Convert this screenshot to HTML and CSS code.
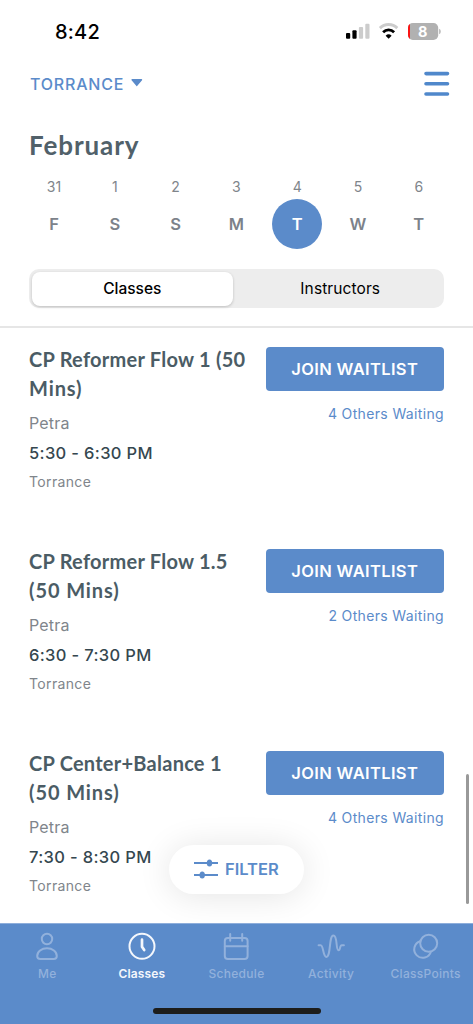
FILE: index.html
```html
<!DOCTYPE html>
<html lang="en">
<head>
<meta charset="utf-8">
<title>Classes</title>
<link rel="stylesheet" href="styles.css">
</head>
<body>
<div class="app">
  <div class="status">
    <span class="clock">8:42</span>
    <svg class="status-icons" width="96" height="18" viewBox="0 0 96 18">
      <rect x="0" y="10" width="4.2" height="5.8" rx="1" fill="#000"/>
      <rect x="6.4" y="7.2" width="4.2" height="8.6" rx="1" fill="#000"/>
      <rect x="12.9" y="4" width="4.2" height="11.8" rx="1" fill="#ccc"/>
      <rect x="19.3" y="0.8" width="4.2" height="15" rx="1" fill="#ccc"/>
      <path d="M33.9 5.1a12.4 12.4 0 0 1 17.4 0" fill="none" stroke="#ccc" stroke-width="2.9"/>
      <path d="M37.1 9.2a7.9 7.9 0 0 1 11 0" fill="none" stroke="#000" stroke-width="2.8"/>
      <path d="M42.6 15.8l-3-3.1a4.4 4.4 0 0 1 6 0z" fill="#000"/>
      <rect x="62" y="0" width="30.2" height="17" rx="4.8" fill="#b1b1b1"/>
      <path d="M64 .9v15.2a4.2 4.2 0 0 1-2-3.8V4.7A4.2 4.2 0 0 1 64 .9z" fill="#fb1414"/>
      <path d="M93.2 5.8c2 .8 2 4.7 0 5.5z" fill="#b1b1b1"/>
      <text class="battery-text" x="76.8" y="13.7" text-anchor="middle">8</text>
    </svg>
  </div>
  <div class="header">
    <div class="location">TORRANCE
      <svg width="12" height="8" viewBox="0 0 12 8"><path d="M1.1.8h9.4L5.8 6.4z" fill="#5b8bca" stroke="#5b8bca" stroke-width="1.4" stroke-linejoin="round"/></svg>
    </div>
    <svg width="26" height="26" viewBox="0 0 26 26"><path d="M2 2.6h21.500M2 12.800h21.500M2 23h21.500" stroke="#5088cb" stroke-width="3.600" stroke-linecap="round"/></svg>
  </div>
  <h1 class="month">February</h1>
  <div class="week">
    <div class="day"><span class="num">31</span><span class="letter">F</span></div>
    <div class="day"><span class="num">1</span><span class="letter">S</span></div>
    <div class="day"><span class="num">2</span><span class="letter">S</span></div>
    <div class="day"><span class="num">3</span><span class="letter">M</span></div>
    <div class="day"><span class="num">4</span><span class="letter selected">T</span></div>
    <div class="day"><span class="num">5</span><span class="letter">W</span></div>
    <div class="day"><span class="num">6</span><span class="letter">T</span></div>
  </div>
  <div class="segments">
    <div class="segment active">Classes</div>
    <div class="segment inactive">Instructors</div>
  </div>
  <div class="list">
    <div class="item">
      <div class="info">
        <h2 class="title">CP Reformer Flow 1 (50<br><span class="second">Mins)</span></h2>
        <div class="teacher">Petra</div><div class="time">5:30 - 6:30 PM</div><div class="place">Torrance</div>
      </div>
      <div class="action"><div class="join">JOIN WAITLIST</div><div class="waiting">4 Others Waiting</div></div>
    </div>
    <div class="item">
      <div class="info">
        <h2 class="title">CP Reformer Flow 1.5<br><span class="second">(50 Mins)</span></h2>
        <div class="teacher">Petra</div><div class="time">6:30 - 7:30 PM</div><div class="place">Torrance</div>
      </div>
      <div class="action"><div class="join">JOIN WAITLIST</div><div class="waiting">2 Others Waiting</div></div>
    </div>
    <div class="item">
      <div class="info">
        <h2 class="title">CP Center+Balance 1<br><span class="second">(50 Mins)</span></h2>
        <div class="teacher">Petra</div><div class="time">7:30 - 8:30 PM</div><div class="place">Torrance</div>
      </div>
      <div class="action"><div class="join">JOIN WAITLIST</div><div class="waiting">4 Others Waiting</div></div>
    </div>
  </div>
  <div class="scrollbar"></div>
  <div class="filter">
    <svg width="26" height="22" viewBox="0 0 26 22"><path d="M1 5h24M1 17h24" stroke="#5b8bca" stroke-width="2"/><ellipse cx="16.500" cy="5" rx="2.700" ry="3.600" fill="#5b8bca"/><ellipse cx="9.200" cy="17" rx="2.700" ry="3.600" fill="#5b8bca"/></svg>
    <span>FILTER</span>
  </div>
  <div class="nav">
    <div class="tab">
      <svg width="30" height="30" viewBox="0 0 30 30"><circle cx="15" cy="8" r="5.200"/><path d="M8.300 28h13.400c2 0 3.100-1.100 3.100-3 0-4.500-4.400-7.700-9.800-7.700s-9.800 3.200-9.800 7.700c0 1.900 1.100 3 3.100 3z"/></svg>
      <span>Me</span>
    </div>
    <div class="tab current">
      <svg width="30" height="30" viewBox="0 0 30 30"><circle cx="15" cy="15.300" r="12.500"/><path d="M15 8.700v7l2.200 3.400" stroke-linecap="round" stroke-linejoin="round" stroke-width="2.700"/></svg>
      <span>Classes</span>
    </div>
    <div class="tab">
      <svg width="30" height="30" viewBox="0 0 30 30"><rect x="3.800" y="7" width="22.800" height="21" rx="3"/><path d="M3.800 15.300h22.800M9.200 3v6.800M21.200 3v6.800" stroke-linecap="round"/></svg>
      <span>Schedule</span>
    </div>
    <div class="tab">
      <svg width="30" height="30" viewBox="0 0 30 30"><path d="M2.600 14.300h2.100c2.800 0 2.300 11.700 5.700 11.700 4.700 0 2.300-21.600 7-21.600 4.500 0 2.100 14.900 5.100 14.900 2.100 0 1-5 3.300-5h2.100" stroke-linecap="round"/></svg>
      <span>Activity</span>
    </div>
    <div class="tab">
      <svg width="30" height="30" viewBox="0 0 30 30"><circle cx="17.700" cy="12.200" r="8.500"/><path d="M9.200 10.200a8.500 8.500 0 1 0 10.700 10.500"/></svg>
      <span>ClassPoints</span>
    </div>
  </div>
  <div class="home"></div>
</div>
</body>
</html>
```
FILE: styles.css
```css
* { box-sizing: border-box; }
body { margin: 0; background: #fff; font-family: Inter, "Liberation Sans", sans-serif; }
.app { position: relative; width: 473px; height: 1024px; overflow: hidden; display: flex; flex-direction: column; background: #fff; }
.status { height: 62px; flex: none; padding: 1px 31px 0 55px; display: flex; align-items: center; justify-content: space-between; }
.clock { font-size: 20px; font-weight: 500; letter-spacing: .2px; padding-top: 1px; }
.status-icons { display: block; }
.battery-text { font: 700 14.5px Inter, sans-serif; fill: #fff; }
.header { height: 44px; flex: none; padding: 0 23.5px 0 30px; display: flex; align-items: center; justify-content: space-between; }
.location { display: flex; align-items: center; gap: 7px; color: #5b8bca; font-size: 16px; font-weight: 500; letter-spacing: .8px; }
.location svg { margin-top: -3px; }
.month { margin: 21.5px 0 .5px 29px; font: 700 26px/34px Lato, sans-serif; color: #51616a; letter-spacing: .9px; }
.week { margin: 17px 0 0 23.6px; width: 425.6px; display: grid; grid-template-columns: repeat(7, 1fr); flex: none; }
.day { display: flex; flex-direction: column; align-items: center; }
.num { height: 20px; line-height: 16px; font-size: 14px; color: #80858b; }
.letter { width: 50px; height: 50px; border-radius: 50%; display: flex; align-items: center; justify-content: center; font-size: 16.5px; font-weight: 600; color: #7c828a; }
.selected { background: #5b8bca; color: #fff; }
.segments { margin: 20px 29px 0 29px; height: 39px; flex: none; padding: 2.5px; display: grid; grid-template-columns: 201.5px 1fr; background: #ededed; border-radius: 10px; }
.segment { display: flex; align-items: center; justify-content: center; font-size: 15.5px; font-weight: 400; letter-spacing: .1px; color: #000; }
.active { background: #fff; border-radius: 8px; box-shadow: 0 1px 3px rgba(0,0,0,.2); font-weight: 500; letter-spacing: 0; }
.inactive { padding-left: 6px; }
.list { margin-top: 18px; border-top: 2px solid #e6e6e6; padding-top: 19.5px; flex: none; }
.item { height: 202px; padding: 0 29px; display: flex; justify-content: space-between; }
.info { white-space: nowrap; }
.title { margin: -2.5px 0 0; font: 700 20px/29px Lato, sans-serif; color: #4b5c65; letter-spacing: .25px; }
.second { letter-spacing: .9px; }
.teacher { margin-top: 5px; height: 30px; line-height: 30px; font-size: 16px; color: #80858b; letter-spacing: .2px; }
.time { height: 30px; line-height: 30px; font-size: 16.5px; font-weight: 500; color: #35474f; letter-spacing: .35px; }
.place { height: 28px; line-height: 28px; font-size: 14px; color: #80858b; letter-spacing: .35px; }
.action { width: 178.5px; flex: none; margin-top: -.5px; }
.join { height: 43.5px; border-radius: 4px; background: #5b8bca; color: #fff; font-size: 16.5px; font-weight: 600; letter-spacing: .35px; display: flex; align-items: center; justify-content: center; padding-top: 1px; }
.waiting { margin-top: 13px; line-height: 20px; text-align: right; font-size: 14px; color: #5b8bca; letter-spacing: .35px; white-space: nowrap; }
.scrollbar { position: absolute; left: 465.5px; top: 774px; width: 3.5px; height: 130px; border-radius: 2px; background: #999; }
.filter { position: absolute; left: 169px; top: 845px; width: 135px; height: 49px; border-radius: 25px; background: #fff; box-shadow: 0 2px 34px rgba(0,0,0,.11); display: flex; align-items: center; padding: 0 0 1px 24px; gap: 6px; color: #5b8bca; font-size: 16.5px; font-weight: 600; }
.nav { position: absolute; left: 0; right: 0; top: 923px; height: 101px; background: #5b8bca; border-top: 1px solid #8eaedb; display: grid; grid-template-columns: repeat(5, 1fr); padding-top: 7px; }
.tab { display: flex; flex-direction: column; align-items: center; color: #92b1dc; font-size: 12px; font-weight: 500; letter-spacing: .3px; white-space: nowrap; }
.tab svg { fill: none; stroke: currentColor; stroke-width: 2; margin-bottom: 5px; }
.current { color: #f4f7fc; font-weight: 600; letter-spacing: .15px; }
.home { position: absolute; left: 153px; top: 1008px; width: 168px; height: 6px; border-radius: 3px; background: #1d1d1b; }
```
